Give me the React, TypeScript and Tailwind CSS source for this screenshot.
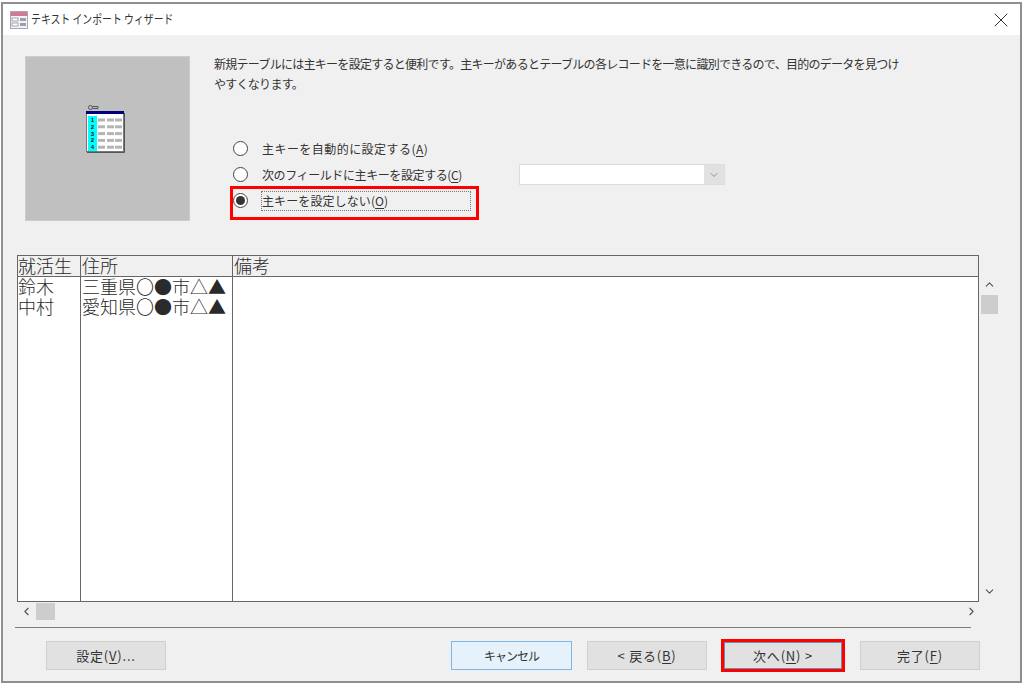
import { ChevronDown, ChevronLeft, ChevronRight, ChevronUp, X } from 'lucide-react';
import { twMerge } from 'tailwind-merge';

const FONT = "font-['Noto_Sans_CJK_JP','Noto_Sans',sans-serif]";

const ROWS = [
  { name: '鈴木', address: '三重県〇●市△▲' },
  { name: '中村', address: '愛知県〇●市△▲' },
];

function TitleIcon() {
  return (
    <svg width="18" height="18" viewBox="0 0 18 18" className="shrink-0">
      <rect x="0.5" y="0.5" width="17" height="17" fill="#f3f3f6" stroke="#a9a9b4" />
      <rect x="1" y="1" width="16" height="4" fill="#d4789a" />
      <rect x="2" y="7" width="6" height="3" fill="#fff" stroke="#7f8794" strokeWidth="0.7" />
      <rect x="2" y="12" width="6" height="3" fill="#fff" stroke="#7f8794" strokeWidth="0.7" />
      <rect x="10" y="7" width="6" height="3" fill="#9aa1ac" />
      <rect x="10" y="12" width="6" height="3" fill="#9aa1ac" />
    </svg>
  );
}

function WizardIcon() {
  const rows = ['1', '2', '3', '2', '4'];
  return (
    <svg width="40" height="48" viewBox="0 0 40 48">
      <circle cx="4.5" cy="2.5" r="2" fill="none" stroke="#555" />
      <path d="M6.5 1.5H12V3.5H6.5" fill="none" stroke="#555" />
      <rect x="0.5" y="6.5" width="37" height="40" fill="#fff" stroke="#777" />
      <path d="M38.5 8V47.5H1" fill="none" stroke="#555" />
      <rect x="0" y="6" width="38" height="3" fill="#00007f" />
      <rect x="2" y="11" width="9" height="35" fill="#00ffff" />
      {rows.map((label, i) => (
        <g key={i}>
          <text x="6.5" y={17 + i * 6.8} fontSize="6" fontWeight="700" textAnchor="middle" fill="#111" fontFamily="Liberation Sans, sans-serif">{label}</text>
          <rect x="12" y={13.5 + i * 6.8} width="7" height="3" fill="#b4b4b4" />
          <rect x="21" y={13.5 + i * 6.8} width="7" height="3" fill="#b4b4b4" />
          <rect x="29" y={13.5 + i * 6.8} width="7" height="3" fill="#b4b4b4" />
        </g>
      ))}
    </svg>
  );
}

function Radio({ checked }: { checked?: boolean }) {
  return (
    <span className="flex h-[15px] w-[15px] shrink-0 items-center justify-center rounded-full border border-[#444] bg-white">
      {checked && <span className="h-[9px] w-[9px] rounded-full bg-[#333]" />}
    </span>
  );
}

function Key({ children }: { children: string }) {
  return <span className="underline underline-offset-2">{children}</span>;
}

function Button({ children, className = '' }: { children: React.ReactNode; className?: string }) {
  return (
    <div className={twMerge('flex h-[29px] w-[120px] items-center justify-center border border-[#d0d0d0] bg-[#e1e1e1] text-[13px] tracking-[0.8px] text-[#333]', className)}>
      {children}
    </div>
  );
}

export default function App() {
  return (
    <div lang="ja" className={`relative h-[685px] w-[1024px] overflow-hidden bg-white pl-px pt-[2px] ${FONT}`}>
      <div className="h-[681px] w-[1021px] border-2 border-[#8f8f8f] bg-[#f0f0f0] text-[#333]">
        {/* title bar */}
        <div className="flex h-[31px] items-center bg-white pl-[7px] pr-[7px]">
          <TitleIcon />
          <span className="ml-[3px] w-[142px] origin-left scale-x-[0.79] whitespace-nowrap text-[12.5px]">テキスト インポート ウィザード</span>
          <X className="ml-auto h-[24px] w-[24px] text-[#333]" strokeWidth={1} />
        </div>

        {/* top */}
        <div className="flex h-[220px] pl-[22px] pt-[21px]">
          <div className="flex h-[165px] w-[165px] shrink-0 items-center justify-center border border-[#cdcdcd] bg-[#c0c0c0] pb-[19px] pr-[4px]">
            <WizardIcon />
          </div>
          <div className="ml-[24px] flex-1">
            <p className="-mt-[2px] w-[692px] text-[12px] leading-[20px] tracking-[-0.72px]">
              新規テーブルには主キーを設定すると便利です。主キーがあるとテーブルの各レコードを一意に識別できるので、目的のデータを見つけやすくなります。
            </p>
            <div className="ml-[19px] mt-[41px] flex flex-col text-[12px]">
              <div className="flex h-[26px] items-center">
                <Radio />
                <span className="ml-[14px] pt-px tracking-[0.45px]">主キーを自動的に設定する(<Key>A</Key>)</span>
              </div>
              <div className="flex h-[26px] items-center">
                <Radio />
                <span className="ml-[14px] w-[257px] pt-[2px] tracking-[-0.4px]">次のフィールドに主キーを設定する(<Key>C</Key>)</span>
                <div className="mt-px flex h-[21px] w-[206px] border border-[#dcdcdc] bg-white">
                  <div className="flex-1" />
                  <div className="flex w-[20px] items-center justify-center bg-[#e1e1e1]">
                    <ChevronDown className="h-[12px] w-[12px] text-[#777]" strokeWidth={1.5} />
                  </div>
                </div>
              </div>
              <div className="flex h-[26px] items-center">
                <Radio checked />
                <span className="ml-[13px] mt-[2px] flex h-[20px] w-[210px] items-center border border-dotted border-[#777] tracking-[0.1px]">主キーを設定しない(<Key>O</Key>)</span>
              </div>
            </div>
          </div>
        </div>

        {/* preview grid */}
        <div className="ml-[14px] flex h-[347px] w-[981px]">
          <div className="flex w-[963px] flex-col border border-[#666] bg-white text-[18px] font-light leading-[20px] text-[#2a2a2a]">
            <div className="flex h-[21px] shrink-0 border-b border-[#666] bg-[#f0f0f0] leading-[18px]">
              <div className="w-[63px] shrink-0 border-r border-[#666]">就活生</div>
              <div className="w-[152px] shrink-0 border-r border-[#666] pl-px">住所</div>
              <div className="pl-px">備考</div>
            </div>
            <div className="flex flex-1">
              <div className="w-[63px] shrink-0 border-r border-[#666]">
                {ROWS.map((r) => <div key={r.name} className="-translate-y-px">{r.name}</div>)}
              </div>
              <div className="w-[152px] shrink-0 border-r border-[#666] pl-px">
                {ROWS.map((r) => <div key={r.name} className="-translate-y-px whitespace-nowrap">{r.address}</div>)}
              </div>
            </div>
          </div>
          <div className="ml-px flex w-[18px] flex-col items-center pt-[23px]">
            <ChevronUp className="h-[13px] w-[13px] text-[#555]" strokeWidth={2} />
            <div className="mt-[4px] h-[19px] w-[17px] bg-[#cdcdcd]" />
            <ChevronDown className="mb-[4px] mt-auto h-[13px] w-[13px] text-[#555]" strokeWidth={2} />
          </div>
        </div>

        {/* horizontal scrollbar */}
        <div className="ml-[14px] flex h-[18px] w-[963px] items-center">
          <div className="flex w-[19px] justify-end pr-[3px]">
            <ChevronLeft className="h-[13px] w-[13px] text-[#555]" strokeWidth={2} />
          </div>
          <div className="h-[17px] w-[19px] bg-[#cdcdcd]" />
          <ChevronRight className="ml-auto mr-[2px] h-[13px] w-[13px] text-[#555]" strokeWidth={2} />
        </div>

        <div className="ml-[12px] mt-[7px] h-px w-[956px] bg-[#7d7d7d]" />

        {/* buttons */}
        <div className="ml-[43px] mt-[11px] flex items-center">
          <Button>設定(<Key>V</Key>)...</Button>
          <Button className="ml-[285px] w-[121px] border-[#7ab8e8] bg-[#e5f1fb] text-[12px] tracking-[-1px]">キャンセル</Button>
          <Button className="ml-[15px]">&lt; 戻る(<Key>B</Key>)</Button>
          <div className="ml-[14px] border-[3px] border-[#ff0000]">
            <Button className="h-[27px] w-[118px] border-[#6c8fb5]">次へ(<Key>N</Key>) &gt;</Button>
          </div>
          <Button className="ml-[15px]">完了(<Key>F</Key>)</Button>
        </div>
      </div>

      {/* red annotation */}
      <div className="absolute left-[230px] top-[186px] h-[34px] w-[249px] border-[3px] border-[#ff0000]" />
    </div>
  );
}
